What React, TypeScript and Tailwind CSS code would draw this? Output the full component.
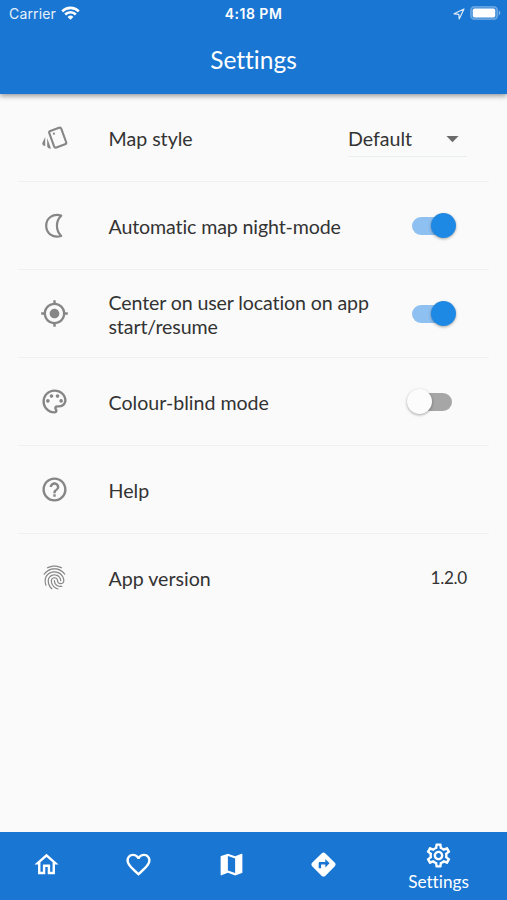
import { useState } from 'react';
import type { ReactNode } from 'react';
import {
  MdArrowDropDown,
  MdDirections,
  MdFavoriteBorder,
  MdFingerprint,
  MdHelpOutline,
  MdMap,
  MdMyLocation,
  MdOutlineHome,
  MdOutlinePalette,
  MdOutlineSettings,
} from 'react-icons/md';

interface RowProps {
  icon: ReactNode;
  label: string;
  tight?: boolean;
  last?: boolean;
  children?: ReactNode;
}

interface ToggleProps {
  label: string;
  checked: boolean;
  onChange: (checked: boolean) => void;
}

const tabs = [
  { name: 'Home', icon: <MdOutlineHome size={29} /> },
  { name: 'Favourites', icon: <MdFavoriteBorder size={29} /> },
  { name: 'Map', icon: <MdMap size={29} /> },
  { name: 'Directions', icon: <MdDirections size={29} /> },
  { name: 'Settings', icon: <MdOutlineSettings size={29} /> },
];

const CardsIcon = () => (
  <svg width="29" height="29" viewBox="0 0 29 29" fill="none">
    <rect x="11.3" y="5.8" width="12.8" height="17.6" rx="1.8" transform="rotate(-20 17.7 14.6)" stroke="currentColor" strokeWidth="2.1" />
    <circle cx="13.9" cy="10.7" r="1.1" fill="currentColor" />
    <path d="M5.2 14v9.2l-1.7-.8c-1.1-.5-1.5-1.6-1.1-2.7Z" fill="currentColor" />
    <path d="M7.2 15 11 25.4H9.6c-1.3 0-2.4-1-2.4-2.4Z" fill="currentColor" />
  </svg>
);

const MoonIcon = () => (
  <svg width="29" height="29" viewBox="0 0 29 29" fill="none" stroke="currentColor" strokeWidth="2.2" strokeLinejoin="round">
    <path d="M21.2 4.6C12.8 2.2 6.2 7.2 6.2 14.8s6.6 12.6 15 10.2C15.5 19.3 15.5 10.3 21.2 4.6Z" />
  </svg>
);

const StatusBar = () => (
  <div className="grid h-[27px] grid-cols-3 items-center pl-[9px] pr-[6px] font-['Inter',sans-serif] text-[14px] leading-none">
    <div className="flex items-center gap-[5px] text-white/90">
      <span className="tracking-[0.15px]">Carrier</span>
      <svg width="19" height="14" viewBox="0 0 19 14" fill="none" stroke="white" strokeWidth="2.6" className="-mt-px">
        <path d="M1.2 5.3a11.8 11.8 0 0 1 16.6 0" />
        <path d="M4.2 8.5a7.5 7.5 0 0 1 10.6 0" />
        <path d="M9.5 13.8 6.6 10.9a4.1 4.1 0 0 1 5.8 0Z" fill="white" stroke="none" />
      </svg>
    </div>
    <span className="-ml-[3px] text-center font-semibold tracking-[0.5px]">4:18 PM</span>
    <div className="flex items-center justify-end gap-[5px]">
      <svg width="12" height="12" viewBox="0 0 12 12" fill="none" stroke="white" strokeOpacity="0.85" strokeWidth="1.2" strokeLinejoin="round">
        <path d="M11 1 1 5.8l4.8.5.4 4.7Z" />
      </svg>
      <svg width="31" height="14" viewBox="0 0 31 14" className="-mt-px">
        <rect x="0.8" y="0.8" width="26.6" height="12.4" rx="3.6" fill="white" fillOpacity="0.15" stroke="white" strokeOpacity="0.3" strokeWidth="1.6" />
        <rect x="2.8" y="2.5" width="22.4" height="9" rx="1.8" fill="white" />
        <path d="M28.8 4.6c2 .7 2 4.1 0 4.8Z" fill="white" fillOpacity="0.45" />
      </svg>
    </div>
  </div>
);

const Row = ({ icon, label, tight, last, children }: RowProps) => (
  <div className={`flex h-[88px] items-center px-[22px] ${last ? '' : 'border-b border-[#f0f0f0]'}`}>
    <div className={`w-[68.5px] shrink-0 text-[#868686] ${last ? '-mt-px' : ''}`}>{icon}</div>
    <span
      className={`w-[270px] text-[19.6px] leading-[23.5px] text-[#333] ${last ? 'pt-px' : 'pt-[2px]'} ${
        tight ? 'tracking-[-0.12px]' : ''
      }`}
    >
      {label}
    </span>
    <div className="flex flex-1 justify-end">{children}</div>
  </div>
);

const Toggle = ({ label, checked, onChange }: ToggleProps) => (
  <button
    role="switch"
    aria-label={label}
    aria-checked={checked}
    onClick={() => onChange(!checked)}
    className={`flex h-[18px] w-[41px] items-center rounded-full ${
      checked ? 'mr-[14px] justify-end bg-[#8ec1f1]' : 'mr-[15px] bg-[#a6a6a6]'
    }`}
  >
    <span
      className={`size-[25px] shrink-0 rounded-full shadow-[0_1px_3px_rgba(0,0,0,0.35)] ${
        checked ? '-mr-[3px] bg-[#1e88e5]' : '-ml-[4px] bg-[#fcfcfc]'
      }`}
    />
  </button>
);

const App = () => {
  const [nightMode, setNightMode] = useState(true);
  const [centerOnUser, setCenterOnUser] = useState(true);
  const [colourBlind, setColourBlind] = useState(false);
  const [activeTab, setActiveTab] = useState('Settings');

  return (
    <div className="flex h-screen flex-col bg-[#fafafa] font-['Lato',sans-serif] [font-variant-ligatures:none]">
      <header className="z-10 h-[94px] shrink-0 bg-[#1976d2] text-white shadow-[0_2px_5px_rgba(0,0,0,0.4)]">
        <StatusBar />
        <h1 className="flex h-[67px] items-center justify-center text-[24.5px]">Settings</h1>
      </header>

      <main className="flex-1 px-[18px]">
        <Row icon={<CardsIcon />} label="Map style">
          <button className="mt-[2px] flex h-[36px] w-[119px] shrink-0 items-center justify-between border-b border-[#e9eff1] pt-px text-[19.6px] text-[#333]">
            Default
            <MdArrowDropDown size={29} className="text-[#6b6b6b]" />
          </button>
        </Row>
        <Row icon={<MoonIcon />} label="Automatic map night-mode" tight>
          <Toggle label="Automatic map night-mode" checked={nightMode} onChange={setNightMode} />
        </Row>
        <Row icon={<MdMyLocation size={29} />} label="Center on user location on app start/resume" tight>
          <Toggle label="Center on user location" checked={centerOnUser} onChange={setCenterOnUser} />
        </Row>
        <Row icon={<MdOutlinePalette size={29} />} label="Colour-blind mode">
          <Toggle label="Colour-blind mode" checked={colourBlind} onChange={setColourBlind} />
        </Row>
        <Row icon={<MdHelpOutline size={29} />} label="Help" />
        <Row icon={<MdFingerprint size={29} />} label="App version" last>
          <span className="text-[17.2px] tracking-[-0.3px] text-[#333]">1.2.0</span>
        </Row>
      </main>

      <nav className="flex h-[68px] shrink-0 bg-[#1976d2] text-white">
        {tabs.map((tab) => (
          <button
            key={tab.name}
            aria-label={tab.name}
            onClick={() => setActiveTab(tab.name)}
            className={`flex flex-col items-center ${activeTab === tab.name ? 'flex-[1.5] pl-px pt-[9px]' : 'flex-1 pl-px pt-[18px]'}`}
          >
            {tab.icon}
            {activeTab === tab.name && <span className="text-[17.2px] leading-[23px]">{tab.name}</span>}
          </button>
        ))}
      </nav>
    </div>
  );
};

export default App;
